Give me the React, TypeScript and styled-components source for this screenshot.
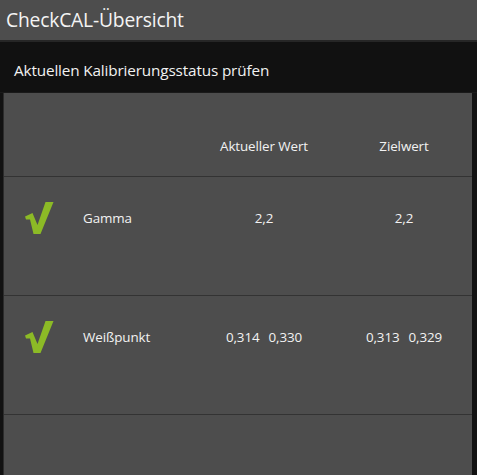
import React from "react";
import styled, { createGlobalStyle } from "styled-components";

const Global = createGlobalStyle`
  html, body { margin: 0; padding: 0; background: #4d4d4d; }
  body { font-family: "Open Sans", "Noto Sans", sans-serif; color: #f2f2f2; overflow: hidden; }
`;

const Page = styled.div`
  width: 477px;
  height: 475px;
  display: flex;
  flex-direction: column;
  background: #4d4d4d;
  overflow: hidden;
`;

const TitleBar = styled.div`
  height: 40px;
  display: flex;
  align-items: center;
  padding-left: 6px;
  font-size: 19.3px;
  letter-spacing: -0.2px;
  color: #f4f4f4;
  box-sizing: border-box;
  padding-bottom: 1px;
`;

const Frame = styled.div`
  flex: 1;
  display: flex;
  flex-direction: column;
  background: #121212;
  border-top: 2px solid #262626;
  padding: 0 5px 0 3px;
`;

const SectionHeader = styled.div`
  height: 51px;
  box-sizing: border-box;
  display: flex;
  align-items: center;
  margin: 0 -5px 0 -3px;
  padding: 5px 0 0 14px;
  font-size: 15.3px;
  letter-spacing: -0.15px;
  color: #f2f2f2;
  background: #111111;
  border-bottom: 1px solid #1a1a1a;
`;

const Panel = styled.div`
  flex: 1;
  background: #4d4d4d;
  border-left: 1px solid #2c2c2c;
`;

const Row = styled.div<{ $height: number; $head?: boolean }>`
  display: grid;
  grid-template-columns: 79px 109px 144px 136px;
  height: ${(p) => p.$height}px;
  box-sizing: border-box;
  border-bottom: 1px solid #333333;
  align-items: ${(p) => (p.$head ? "end" : "start")};
  padding-top: ${(p) => (p.$head ? 0 : 24)}px;
  padding-bottom: ${(p) => (p.$head ? 21 : 0)}px;
  font-size: 13.4px;
`;

const IconCell = styled.div`
  display: flex;
  justify-content: flex-start;
  padding-left: 21px;
  height: 34px;
  align-items: center;
`;

const LabelCell = styled.div`
  height: 34px;
  display: flex;
  align-items: center;
  font-size: 13.4px;
  letter-spacing: -0.1px;
`;

const ValueCell = styled.div`
  height: 34px;
  display: flex;
  align-items: center;
  justify-content: center;
  gap: 9px;
  font-size: 13.4px;
  letter-spacing: -0.1px;
`;

const HeadCell = styled.div`
  text-align: center;
  font-size: 13.4px;
  letter-spacing: -0.1px;
`;

const Check = () => (
  <svg width="30" height="34" viewBox="0 0 30 34">
    <polygon
      points="0,15.5 7.5,12 12.5,24 20.5,1 28.5,1 15.5,33 8.5,33 5,18.5 1,18.5"
      fill="#8cba26"
    />
  </svg>
);

type Item = { label: string; current: string[]; target: string[] };

const items: Item[] = [
  { label: "Gamma", current: ["2,2"], target: ["2,2"] },
  { label: "Weißpunkt", current: ["0,314", "0,330"], target: ["0,313", "0,329"] },
];

export default function App() {
  return (
    <Page>
      <Global />
      <TitleBar>CheckCAL-Übersicht</TitleBar>
      <Frame>
        <SectionHeader>Aktuellen Kalibrierungsstatus prüfen</SectionHeader>
        <Panel>
          <Row $height={84} $head>
            <div />
            <div />
            <HeadCell>Aktueller Wert</HeadCell>
            <HeadCell>Zielwert</HeadCell>
          </Row>
          {items.map((it) => (
            <Row key={it.label} $height={119}>
              <IconCell>
                <Check />
              </IconCell>
              <LabelCell>{it.label}</LabelCell>
              <ValueCell>
                {it.current.map((v) => (
                  <span key={v}>{v}</span>
                ))}
              </ValueCell>
              <ValueCell>
                {it.target.map((v) => (
                  <span key={v}>{v}</span>
                ))}
              </ValueCell>
            </Row>
          ))}
        </Panel>
      </Frame>
    </Page>
  );
}
